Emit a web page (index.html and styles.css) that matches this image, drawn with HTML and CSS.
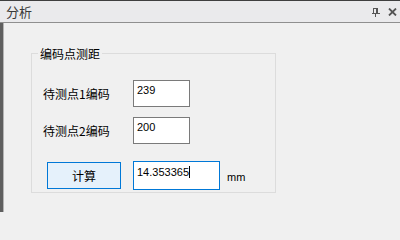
FILE: index.html
```html
<!DOCTYPE html>
<html lang="zh-CN">
<head>
<meta charset="utf-8">
<title>分析</title>
<link rel="stylesheet" href="styles.css">
</head>
<body>
<div class="window">
  <div class="titlebar">
    <span class="title">分析</span>
    <div class="tools">
      <svg class="pin" width="8" height="9" viewBox="0 0 8 9" shape-rendering="crispEdges">
        <rect x="1" y="0" width="1" height="5" fill="#555"/>
        <rect x="1" y="0" width="5" height="1" fill="#555"/>
        <rect x="4" y="0" width="2" height="5" fill="#555"/>
        <rect x="0" y="5" width="8" height="1" fill="#555"/>
        <rect x="3" y="6" width="1" height="3" fill="#555"/>
      </svg>
      <svg class="close" width="9" height="8" viewBox="0 0 9 8">
        <path d="M1 0.5 L8 7.5 M8 0.5 L1 7.5" stroke="#555" stroke-width="1.8" fill="none"/>
      </svg>
    </div>
  </div>
  <div class="body">
    <div class="content">
      <fieldset class="group">
        <legend class="legend">编码点测距</legend>
        <div class="rows">
          <span class="label">待测点1编码</span>
          <div class="field">239</div>
          <span class="label">待测点2编码</span>
          <div class="field">200</div>
          <div class="button">计算</div>
          <div class="field result">14.353365<span class="caret"></span></div>
          <span class="unit">mm</span>
        </div>
      </fieldset>
    </div>
  </div>
</div>
</body>
</html>
```
FILE: styles.css
```css
html, body {
  margin: 0;
  padding: 0;
}
body {
  width: 400px;
  height: 212px;
  overflow: hidden;
  background: #f0f0f0;
  font-family: "Noto Sans CJK SC", "Liberation Sans", sans-serif;
  color: #000;
}
.window {
  display: flex;
  flex-direction: column;
  height: 212px;
  box-sizing: border-box;
  border-top: 1px solid #3f3f3f;
}
.titlebar {
  height: 21px;
  flex: none;
  display: flex;
  align-items: center;
  padding-left: 6px;
  padding-right: 3px;
  background: #eaeaec;
  border-bottom: 1px solid #8f8f8f;
}
.title {
  flex: 1;
  font-size: 13px;
  line-height: 14px;
  color: #3a3a3a;
}
.tools {
  display: flex;
  align-items: center;
  gap: 8px;
}
.pin {
  display: block;
  margin-top: 1px;
}
.close {
  display: block;
}
.body {
  flex: 1;
  display: flex;
  border-left: 3px solid #5f5f5f;
}
.content {
  flex: 1;
  border-left: 1px solid #b4b4b4;
  background: #f0f0f0;
}
.group {
  box-sizing: border-box;
  width: 245px;
  margin: 24px 0 0 27px;
  padding: 0;
  border: 1px solid #dcdcdc;
  min-width: 0;
}
.legend {
  margin-left: 6px;
  padding: 0 2px;
  font-size: 12px;
  line-height: 13px;
}
.rows {
  display: grid;
  grid-template-columns: 90px 87px auto;
  grid-template-rows: 27px 27px 29px;
  row-gap: 10px;
  align-items: center;
  justify-items: start;
  padding: 20px 0 9px 11px;
}
.label {
  grid-column: 1;
  white-space: nowrap;
  font-size: 12px;
  line-height: 14px;
}
.field {
  grid-column: 2;
  box-sizing: border-box;
  width: 57px;
  height: 27px;
  border: 1px solid #7a7a7a;
  background: #fff;
  padding: 3px 3px 0;
  font-family: "Liberation Sans", sans-serif;
  font-size: 11px;
  line-height: 12px;
  white-space: nowrap;
}
.button {
  grid-column: 1;
  box-sizing: border-box;
  width: 74px;
  height: 27px;
  margin-left: 4px;
  margin-top: 14px;
  border: 1px solid #0078d7;
  background: #e5f1fb;
  display: flex;
  align-items: center;
  justify-content: center;
  font-size: 12px;
}
.result {
  width: 87px;
  height: 29px;
  margin-top: 14px;
  border-color: #0078d7;
  padding-top: 4px;
}
.caret {
  display: inline-block;
  width: 0;
  height: 12px;
  border-right: 1px solid #000;
  vertical-align: -2px;
}
.unit {
  grid-column: 3;
  margin-left: 7px;
  margin-top: 16px;
  font-family: "Liberation Sans", sans-serif;
  font-size: 11px;
}
```
